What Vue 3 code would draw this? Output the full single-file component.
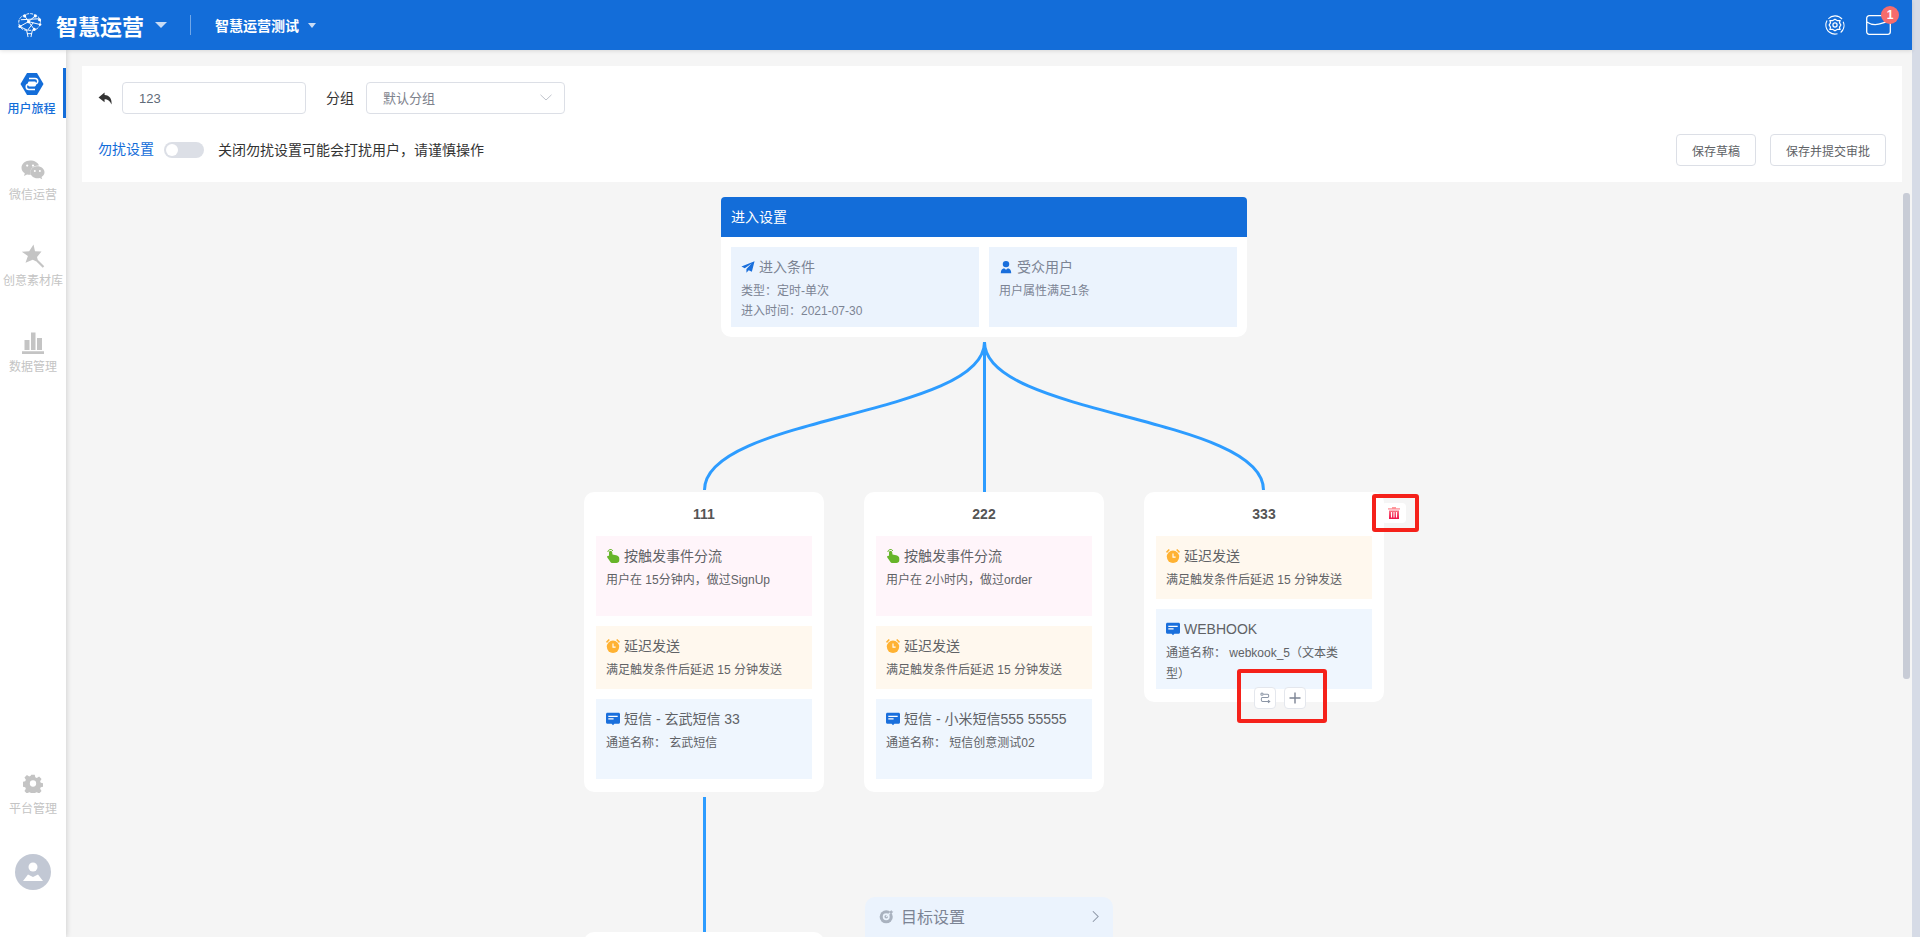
<script setup>
const nav = [
  { label: '用户旅程', icon: 'i-journey', active: true },
  { label: '微信运营', icon: 'i-wechat' },
  { label: '创意素材库', icon: 'i-star' },
  { label: '数据管理', icon: 'i-bars' },
]

const delay = { kind: 'delay', icon: 'i-clock', title: '延迟发送', lines: ['满足触发条件后延迟 15 分钟发送'] }

const cards = [
  {
    name: '111',
    left: 502,
    tiles: [
      { kind: 'event', icon: 'i-hand', title: '按触发事件分流', lines: ['用户在 15分钟内，做过SignUp'] },
      delay,
      { kind: 'sms', icon: 'i-msg', title: '短信 - 玄武短信 33', lines: ['通道名称： 玄武短信'] },
    ],
  },
  {
    name: '222',
    left: 782,
    tiles: [
      { kind: 'event', icon: 'i-hand', title: '按触发事件分流', lines: ['用户在 2小时内，做过order'] },
      delay,
      { kind: 'sms', icon: 'i-msg', title: '短信 - 小米短信555 55555', lines: ['通道名称： 短信创意测试02'] },
    ],
  },
  {
    name: '333',
    left: 1062,
    tiles: [
      delay,
      { kind: 'hook', icon: 'i-msg', title: 'WEBHOOK', lines: ['通道名称： webkook_5（文本类', '型）'] },
    ],
  },
]
</script>

<template>
  <div class="app">
    <svg class="defs" aria-hidden="true">
      <defs>
        <linearGradient id="trash-grad" x1="0" y1="0" x2="0" y2="1">
          <stop offset="0" stop-color="#ffa0a0" />
          <stop offset="1" stop-color="#f0104a" />
        </linearGradient>
      </defs>
      <symbol id="i-journey" viewBox="0 0 24 24">
        <path fill="#136dd9" d="M7 1h10l6.500 11L17 23H7L.5 12z" />
        <path fill="none" stroke="#fff" stroke-width="1.600" d="M9 6.500h6a2.700 2.700 0 0 1 0 5.500H9a2.700 2.700 0 0 0 0 5.500h6" />
        <rect x="8" y="9.600" width="8" height="4.800" rx="1.400" fill="#fff" />
      </symbol>
      <symbol id="i-wechat" viewBox="0 0 24 24">
        <path fill="#c4c4c4" d="M9.200 2.500C4.400 2.500.5 5.700.5 9.700c0 2.300 1.300 4.300 3.300 5.600L3 18l3-1.600c1 .3 2 .4 3 .4l.9-.1c-.3-.8-.5-1.600-.5-2.500 0-3.700 3.500-6.700 8-6.700h.6C17.200 4.600 13.500 2.500 9.200 2.500z" />
        <path fill="#c4c4c4" d="M23.500 14.200c0-3.300-3.200-6-7.100-6s-7.100 2.700-7.100 6 3.200 6 7.100 6c.8 0 1.600-.1 2.300-.3l2.500 1.400-.7-2.300c1.800-1.100 3-2.900 3-4.800z" />
        <circle cx="13.800" cy="13" r="1" fill="#fff" />
        <circle cx="18.900" cy="13" r="1" fill="#fff" />
        <circle cx="6.200" cy="7.600" r="1.100" fill="#fff" />
        <circle cx="12" cy="7.600" r="1.100" fill="#fff" />
      </symbol>
      <symbol id="i-star" viewBox="0 0 24 24">
        <path fill="#c4c4c4" d="M12.500.5l1.500 6.800 6.500.3-4.500 5.400 1.500 5.500-5.800-2.800-7.200 3 2.400-6.700L.8 7.800l7.400-.6z" />
        <path fill="none" stroke="#c4c4c4" stroke-width="2.200" d="M16.500 17l6 6" />
      </symbol>
      <symbol id="i-bars" viewBox="0 0 24 24">
        <path fill="#c4c4c4" d="M3.500 10h5v10h-5zM10 2.500h4.500V20H10zM16 8h5v12h-5zM1 21.200h22V24H1z" />
      </symbol>
      <symbol id="i-gear" viewBox="0 0 24 24">
        <path fill="#c4c4c4" fill-rule="evenodd" d="M9.800.8h4.400l.7 3.300 1.900.8 2.900-1.800 3.100 3.100-1.800 2.900.8 1.900 3.300.7v4.400l-3.300.7-.8 1.900 1.800 2.900-3.100 3.100-2.900-1.800-1.900.8-.7 3.300H9.800l-.7-3.300-1.900-.8-2.900 1.800-3.100-3.100 1.800-2.900-.8-1.900-3.300-.7V9.800l3.300-.7.8-1.900L1.200 4.300l3.100-3.100 2.900 1.800 1.900-.8zM12 8a4 4 0 1 0 0 8 4 4 0 0 0 0-8z" />
      </symbol>
      <symbol id="i-hand" viewBox="0 0 14 14">
        <path fill="#67b52a" d="M3 3.300c0-1.700 3-1.700 3.200 0l.3 2.300 3.700.7c1.900.4 3.100 1.500 3.100 3.400v1.500c0 1.700-1.300 2.800-3 2.800H6.700c-1.200 0-2-.5-2.600-1.500L1.300 8.500c-.7-1.100.6-2.300 1.700-1.400z" />
        <path fill="none" stroke="#67b52a" stroke-width="1" d="M1.800 3A2.800 2.800 0 0 1 7 1.900" />
      </symbol>
      <symbol id="i-clock" viewBox="0 0 14 14">
        <circle cx="7" cy="7.800" r="6.200" fill="#ffb233" />
        <path fill="#ffb233" d="M0 2.800L2.700 0l1.200 1L1 3.900zM14 2.800L11.300 0l-1.200 1L13 3.900z" />
        <path fill="none" stroke="#fff" stroke-width="1.100" d="M7 4.600v3.500h2.600" />
      </symbol>
      <symbol id="i-msg" viewBox="0 0 14 14">
        <path fill="#1a6fdc" d="M1.500.8h11c.9 0 1.500.6 1.500 1.500v8c0 .9-.6 1.500-1.500 1.500H8.400L7 13.200l-1.400-1.400H1.500C.6 11.800 0 11.200 0 10.300v-8C0 1.400.6.800 1.500.8z" />
        <path fill="#fff" d="M2.300 3.700h9.400v1.200H2.300zM2.300 6.300h5.300v1.200H2.300z" />
      </symbol>
      <symbol id="i-plane" viewBox="0 0 16 16">
        <path fill="#1a6fdc" d="M15.500 1.500L.5 7.300l3.800 2.200L12.200 4 6.200 10.300v4.200l2.600-2.900 3.600 1.800z" />
      </symbol>
      <symbol id="i-user" viewBox="0 0 16 16">
        <circle cx="8" cy="4.700" r="3.700" fill="#1a6fdc" />
        <path fill="#1a6fdc" d="M2 15c0-3.800 2-5.200 3.800-5.500L8 11l2.200-1.500C12 9.800 14 11.200 14 15z" />
      </symbol>
      <symbol id="i-goal" viewBox="0 0 16 16">
        <circle cx="7.700" cy="8.300" r="7" fill="#a9b2bf" />
        <circle cx="7.700" cy="8.300" r="3.700" fill="#ebf3fd" />
        <circle cx="7.700" cy="8.300" r="1.900" fill="#a9b2bf" />
        <path fill="none" stroke="#ebf3fd" stroke-width="1.500" d="M7.700 8.300l5.500-5.500" />
        <path fill="#a9b2bf" d="M11.300 3l2-2 .4 1.500 1.600.4-2 2-1.800-.2z" />
      </symbol>
    </svg>

    <div class="main">
      <header class="topbar">
        <svg class="logo" viewBox="0 0 26 26" fill="none" stroke="#fff" stroke-width="1">
          <path d="M3 14C0 9 3 3 8 2.500c3-2.500 8-2.500 11 0 5 1 7 7 4 11.500-2 3-5 4-7 4h-6c-3 0-5.500-1.500-7-4z" stroke-dasharray="3 1.200" />
          <path d="M8 3l4 6 7-6M12 9l-9 5M12 9l6 8M12 9l12 3M3 14l8 4 6-8M4 7l19-1M10 18l1.500 7M16 18l-1.500 7M10.500 21.500h5" />
          <g fill="#fff" stroke="none">
            <circle cx="8" cy="3" r="1.600" /><circle cx="19" cy="3" r="1.600" /><circle cx="23.500" cy="7" r="1.600" />
            <circle cx="3" cy="14" r="1.600" /><circle cx="12" cy="9" r="1.600" /><circle cx="18" cy="17" r="1.600" />
            <circle cx="24" cy="12" r="1.300" />
          </g>
        </svg>
        <span class="brand">智慧运营</span>
        <i class="caret caret--big"></i>
        <i class="divider"></i>
        <span class="project">智慧运营测试</span>
        <i class="caret"></i>
        <svg class="settings" viewBox="0 0 24 24" fill="none" stroke="#fff">
          <path stroke-width="1.300" d="M4 4.500A11 11 0 0 1 20.500 5M21.800 8a11 11 0 0 1-3 13M15 22.500A11 11 0 0 1 1 12a11 11 0 0 1 1.500-5.500" />
          <path stroke-width="1.500" d="M12 5l3 1.800h3l-.6 2.700L19 12l-1.600 2.500.6 2.700h-3L12 19l-3-1.800H6l.6-2.700L5 12l1.600-2.500L6 6.800h3z" />
          <circle cx="12" cy="12" r="2.500" stroke-width="1.500" />
        </svg>
        <div class="mail">
          <svg viewBox="0 0 25 20" fill="none" stroke="#fff" stroke-width="1.300">
            <rect x=".7" y=".7" width="23.600" height="18.600" rx="2.500" />
            <path d="M.7 7c4 2.500 8 3.200 12 2.200 4-1 8-3 11.600-3.200" />
          </svg>
          <span class="badge">1</span>
        </div>
      </header>

      <div class="body">
        <aside class="side">
          <a v-for="item in nav" :key="item.label" class="nav-item" :class="{ 'is-active': item.active }">
            <svg class="nav-icon"><use :href="'#' + item.icon" /></svg>
            <span>{{ item.label }}</span>
          </a>
          <a class="nav-item nav-item--bottom">
            <svg class="nav-icon nav-icon--gear"><use href="#i-gear" /></svg>
            <span>平台管理</span>
          </a>
          <div class="avatar">
            <svg viewBox="0 0 36 36"><circle cx="18" cy="13" r="4.500" fill="#fff" /><path fill="#fff" d="M8 27l5-6.500 5 2.500 5-2.500 5 6.500z" /></svg>
          </div>
        </aside>

        <section class="content">
          <div class="panel">
            <div class="row">
              <svg class="back" viewBox="0 0 16 14"><path fill="#333" d="M7 .5L.5 6 7 11V7.800c3.500 0 5.700 1.500 7.500 5.700.6-5.800-2-10-7.500-10.300z" /></svg>
              <div class="field field--name">123</div>
              <span class="group-label">分组</span>
              <div class="field field--select">
                默认分组
                <svg viewBox="0 0 12 7" fill="none" stroke="#c0c4cc"><path d="M.5 .8L6 6l5.500-5.200" /></svg>
              </div>
            </div>
            <div class="row row--second">
              <span class="dnd-label">勿扰设置</span>
              <span class="toggle"><i></i></span>
              <span class="dnd-hint">关闭勿扰设置可能会打扰用户，请谨慎操作</span>
              <button type="button" class="btn btn--first">保存草稿</button>
              <button type="button" class="btn">保存并提交审批</button>
            </div>
          </div>

          <div class="canvas">
            <svg class="links" width="1820" height="760" fill="none" stroke="#2d9cff" stroke-width="3">
              <path d="M902.500 160C902.500 234 622.500 234 622.500 308" />
              <path d="M902.500 160V310" />
              <path d="M902.500 160C902.500 234 1181.500 234 1181.500 308" />
              <path d="M622.500 615V750" />
            </svg>

            <div class="entry">
              <div class="entry__head">进入设置</div>
              <div class="entry__body">
                <div class="entry__tile">
                  <div class="tile__title"><svg class="tile__icon"><use href="#i-plane" /></svg>进入条件</div>
                  <p>类型：定时-单次</p>
                  <p>进入时间：2021-07-30</p>
                </div>
                <div class="entry__tile">
                  <div class="tile__title"><svg class="tile__icon"><use href="#i-user" /></svg>受众用户</div>
                  <p>用户属性满足1条</p>
                </div>
              </div>
            </div>

            <div v-for="card in cards" :key="card.name" class="node" :style="{ left: card.left + 'px' }">
              <div class="node__name">{{ card.name }}</div>
              <div v-for="tile in card.tiles" :key="tile.title" class="tile" :class="'tile--' + tile.kind">
                <div class="tile__title"><svg class="tile__icon"><use :href="'#' + tile.icon" /></svg>{{ tile.title }}</div>
                <p v-for="line in tile.lines" :key="line">{{ line }}</p>
              </div>
            </div>

            <div class="node-next"></div>

            <div class="goal">
              <svg class="goal__icon"><use href="#i-goal" /></svg>
              <span>目标设置</span>
              <svg class="goal__arrow" viewBox="0 0 8 14" fill="none" stroke="#8b95a5" stroke-width="1.200"><path d="M1 1l6 6-6 6" /></svg>
            </div>

            <button type="button" class="trash-btn">
              <svg viewBox="0 0 12 12"><path fill="url(#trash-grad)" d="M4 0h4v1.200h4v1.300H0V1.200h4zM1 3.500h10V12H1zM3 5v5.500h1V5zm2.500 0v5.500h1V5zM8 5v5.500h1V5z" fill-rule="evenodd" /></svg>
            </button>
            <button type="button" class="mini-btn mini-btn--swap">
              <svg viewBox="0 0 14 14" fill="none" stroke="#8b95a5" stroke-width="1.200"><circle cx="3.500" cy="2.500" r="1.300" /><path d="M5 2.500h5c1.800 0 1.800 4 0 4H4c-1.800 0-1.800 4.500 0 4.500h8M10.500 9.500L12.500 11l-2 1.500" /></svg>
            </button>
            <button type="button" class="mini-btn mini-btn--add">
              <svg viewBox="0 0 12 12" stroke="#7c8494" stroke-width="1.400"><path d="M6 .5v11M.5 6h11" /></svg>
            </button>
            <i class="mark mark--trash"></i>
            <i class="mark mark--actions"></i>
          </div>

          <i class="thumb"></i>
        </section>
      </div>
    </div>
    <div class="track"></div>
  </div>
</template>

<style>
html,
body {
  margin: 0;
  overflow: hidden;
}
</style>

<style scoped>
.app {
  display: flex;
  width: 1920px;
  height: 937px;
  overflow: hidden;
  background: #fff;
  font-family: "Liberation Sans", "Noto Sans CJK SC", sans-serif;
  font-size: 12px;
  color: #606266;
}
.defs {
  position: absolute;
  width: 0;
  height: 0;
}
.main {
  display: flex;
  flex-direction: column;
  width: 1910px;
}
.track {
  width: 8px;
  margin-left: 2px;
  background: #d6dbe6;
}

.topbar {
  position: relative;
  z-index: 3;
  display: flex;
  flex: none;
  align-items: center;
  height: 50px;
  width: 1912px;
  padding-left: 17px;
  box-sizing: border-box;
  background: #136dd9;
  color: #fff;
  box-shadow: 0 1px 4px rgba(0, 0, 0, 0.12);
}
.logo {
  width: 25px;
  height: 25px;
  margin-right: 1px;
}
.brand {
  margin-left: 13px;
  font-size: 22px;
  font-weight: 700;
}
.caret {
  width: 0;
  height: 0;
  margin-left: 9px;
  border: 4px solid transparent;
  border-top: 5px solid #c9dcf5;
  border-bottom: 0;
}
.caret--big {
  margin-left: 11px;
  border-width: 6px 6px 0;
}
.divider {
  width: 1px;
  height: 20px;
  margin: 0 24px 0 23px;
  background: rgba(255, 255, 255, 0.4);
}
.project {
  font-size: 14px;
  font-weight: 700;
}
.settings {
  width: 20px;
  height: 20px;
  margin-left: auto;
}
.mail {
  position: relative;
  width: 25px;
  height: 20px;
  margin: 0 21px;
}
.mail svg {
  display: block;
  width: 25px;
  height: 20px;
}
.badge {
  position: absolute;
  top: -9px;
  right: -8px;
  width: 18px;
  height: 18px;
  border-radius: 50%;
  background: #f56c6c;
  font-size: 12px;
  font-weight: 700;
  line-height: 18px;
  text-align: center;
}

.body {
  display: flex;
  flex: 1;
  min-height: 0;
  width: 1912px;
}
.side {
  position: relative;
  z-index: 2;
  display: flex;
  flex: none;
  flex-direction: column;
  gap: 36px;
  width: 66px;
  padding: 18px 0 47px;
  box-sizing: border-box;
  background: #fff;
  box-shadow: 1px 0 5px rgba(0, 0, 0, 0.14);
}
.nav-item {
  display: flex;
  flex-direction: column;
  align-items: center;
  height: 50px;
  line-height: 18px;
  color: #c4c4c4;
  white-space: nowrap;
}
.nav-item.is-active {
  border-right: 3px solid #136dd9;
  color: #136dd9;
  font-weight: 500;
}
.nav-item--bottom {
  margin-top: auto;
}
.nav-item--bottom span {
  padding-top: 1px;
}
.nav-icon {
  width: 24px;
  height: 24px;
  margin: 4px 0;
}
.nav-icon--gear {
  width: 20px;
  height: 20px;
  margin: 6px 0;
}
.avatar {
  flex: none;
  width: 36px;
  height: 36px;
  margin-left: 15px;
  border-radius: 50%;
  background: #c2c8d4;
}
.avatar svg {
  display: block;
}

.content {
  position: relative;
  flex: 1;
  min-width: 0;
  padding: 16px 10px 0 16px;
  background: #f5f5f5;
}
.thumb {
  position: absolute;
  top: 143px;
  left: 1837px;
  width: 7px;
  height: 486px;
  border-radius: 3px;
  background: #c8ccd6;
}

.panel {
  height: 116px;
  padding: 16px;
  box-sizing: border-box;
  background: #fff;
}
.row {
  display: flex;
  align-items: center;
  height: 32px;
}
.row--second {
  margin-top: 20px;
}
.back {
  width: 15px;
  height: 13px;
  margin-right: 9px;
}
.field {
  display: flex;
  align-items: center;
  height: 32px;
  padding-left: 16px;
  box-sizing: border-box;
  border: 1px solid #dcdfe6;
  border-radius: 4px;
  font-size: 13px;
  color: #5f6b78;
}
.field--name {
  width: 184px;
}
.group-label {
  margin: 0 12px 2px 20px;
  font-size: 14px;
  color: #333;
}
.field--select {
  justify-content: space-between;
  width: 199px;
  padding-right: 12px;
  padding-bottom: 2px;
  color: #7d828c;
}
.field--select svg {
  width: 12px;
  height: 7px;
}
.dnd-label {
  margin-bottom: 4px;
  font-size: 14px;
  color: #136dd9;
}
.toggle {
  width: 40px;
  height: 16px;
  margin: 0 14px 0 10px;
  border-radius: 8px;
  background: #dcdfe6;
}
.toggle i {
  display: block;
  width: 12px;
  height: 12px;
  margin: 2px;
  border-radius: 50%;
  background: #fff;
}
.dnd-hint {
  margin-bottom: 2px;
  font-size: 14px;
  color: #333;
}
.btn {
  height: 32px;
  margin-left: 14px;
  padding: 0 15px;
  border: 1px solid #dcdfe6;
  border-radius: 4px;
  background: #fff;
  font: inherit;
  color: #606266;
}
.btn--first {
  margin-left: auto;
}

.canvas {
  position: relative;
  height: 755px;
}
.links {
  position: absolute;
  top: 0;
  left: 0;
}
.entry {
  position: absolute;
  top: 15px;
  left: 639px;
  width: 526px;
  height: 140px;
  overflow: hidden;
  border-radius: 4px 4px 10px 10px;
  background: #fff;
}
.entry__head {
  height: 40px;
  padding-left: 10px;
  background: #136dd9;
  font-size: 14px;
  line-height: 40px;
  color: #fff;
}
.entry__body {
  display: flex;
  gap: 10px;
  padding: 10px;
}
.entry__tile {
  flex: 1;
  height: 80px;
  padding: 10px;
  box-sizing: border-box;
  background: #ebf3fd;
  color: #7c8494;
}
.entry__tile p {
  margin: 4px 0 0;
  line-height: 20px;
}
.entry__tile p + p {
  margin-top: 0;
}

.node {
  position: absolute;
  top: 310px;
  display: flex;
  flex-direction: column;
  gap: 10px;
  width: 240px;
  padding: 0 12px 13px;
  box-sizing: border-box;
  border-radius: 10px;
  background: #fff;
}
.node__name {
  height: 34px;
  font-size: 14px;
  font-weight: 700;
  line-height: 44px;
  text-align: center;
  color: #555;
}
.tile {
  height: 80px;
  padding: 10px;
  box-sizing: border-box;
}
.tile p {
  margin: 4px 0 0;
  line-height: 21px;
}
.tile p + p {
  margin-top: 0;
}
.tile--event {
  background: #fff5fa;
}
.tile--delay {
  height: 63px;
  background: #fff8ee;
}
.tile--sms,
.tile--hook {
  background: #eff6fe;
}
.tile__title {
  display: flex;
  align-items: center;
  font-size: 14px;
  line-height: 20px;
  white-space: nowrap;
}
.tile__icon {
  flex: none;
  width: 14px;
  height: 14px;
  margin-right: 4px;
}

.node-next {
  position: absolute;
  top: 750px;
  left: 502px;
  width: 240px;
  height: 40px;
  border-radius: 10px;
  background: #fff;
}
.goal {
  position: absolute;
  top: 715px;
  left: 783px;
  display: flex;
  align-items: center;
  width: 248px;
  height: 38px;
  padding: 0 14px;
  box-sizing: border-box;
  border-radius: 10px 10px 0 0;
  background: #ebf3fd;
  box-shadow: 0 2px 0 #ebf3fd;
  font-size: 16px;
  color: #7c8494;
}
.goal__icon {
  width: 15px;
  height: 15px;
  margin-right: 7px;
}
.goal__arrow {
  width: 7px;
  height: 13px;
  margin-left: auto;
}

.trash-btn {
  position: absolute;
  top: 321px;
  left: 1300px;
  display: flex;
  align-items: center;
  justify-content: center;
  width: 24px;
  height: 20px;
  padding: 0;
  border: 0;
  border-radius: 4px;
  background: #fff;
}
.trash-btn svg {
  width: 12px;
  height: 12px;
}
.mini-btn {
  position: absolute;
  top: 505px;
  display: flex;
  align-items: center;
  justify-content: center;
  width: 22px;
  height: 22px;
  padding: 0;
  border: 1px solid #e4e7ed;
  border-radius: 4px;
  background: #fff;
}
.mini-btn svg {
  width: 12px;
  height: 12px;
}
.mini-btn--swap {
  left: 1172px;
}
.mini-btn--add {
  left: 1202px;
}
.mark {
  position: absolute;
  box-sizing: border-box;
  border: 4px solid #f5211a;
  border-radius: 3px;
}
.mark--trash {
  top: 312px;
  left: 1290px;
  width: 47px;
  height: 38px;
}
.mark--actions {
  top: 487px;
  left: 1155px;
  width: 90px;
  height: 54px;
}
</style>
